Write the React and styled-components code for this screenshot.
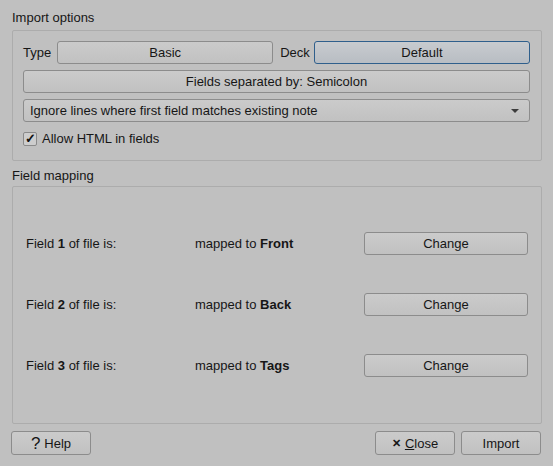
import React from "react";
import styled, { createGlobalStyle } from "styled-components";

const Global = createGlobalStyle`
  html, body { margin: 0; padding: 0; background: #c0c0c0; }
  body { font-family: "Liberation Sans", Arial, sans-serif; font-size: 13px; color: #161616; }
`;

const Window = styled.div`
  width: 553px;
  height: 466px;
  box-sizing: border-box;
  padding: 10px 12px 0 12px;
  display: flex;
  flex-direction: column;
  background: #c0c0c0;
`;

const SectionTitle = styled.div`
  height: 15px;
  line-height: 15px;
  margin-bottom: ${(p) => p.$mb || 5}px;
`;

const Group = styled.div`
  border: 1px solid #acacac;
  border-radius: 2px;
  box-sizing: border-box;
  width: 530px;
`;

const OptionsBody = styled(Group)`
  height: 131px;
  padding: 10px 11px 0 10px;
  display: flex;
  flex-direction: column;
  gap: 6px;
  margin-bottom: 7px;
`;

const Row = styled.div`
  display: flex;
  align-items: center;
`;

const Label = styled.span`
  margin: 0 ${(p) => p.$mr || 5}px 0 ${(p) => p.$ml || 0}px;
`;

const Button = styled.button`
  font-family: inherit;
  font-size: 13px;
  color: #161616;
  height: ${(p) => p.$h || 23}px;
  width: ${(p) => (p.$w ? p.$w + "px" : "auto")};
  flex: ${(p) => (p.$grow ? 1 : "none")};
  box-sizing: border-box;
  border: 1px solid ${(p) => (p.$focus ? "#2f5f8c" : "#8c8c8c")};
  border-radius: 3px;
  background: ${(p) =>
    p.$focus
      ? "linear-gradient(#c8cbcf, #b8bdc3)"
      : "linear-gradient(#cbcbcb, #c1c1c1)"};
  padding: 0;
  display: flex;
  align-items: center;
  justify-content: center;
  gap: 4px;
  cursor: default;
`;

const Combo = styled.div`
  height: 23px;
  box-sizing: border-box;
  border: 1px solid #8c8c8c;
  border-radius: 3px;
  background: linear-gradient(#cbcbcb, #c1c1c1);
  display: flex;
  align-items: center;
  padding: 0 10px 0 6px;
`;

const ComboText = styled.span`
  flex: 1;
`;

const Arrow = styled.span`
  width: 0;
  height: 0;
  border-left: 4px solid transparent;
  border-right: 4px solid transparent;
  border-top: 4px solid #3c3c3c;
`;

const CheckRow = styled.label`
  display: flex;
  align-items: center;
  gap: 5px;
  margin-top: 3px;
`;

const CheckBox = styled.span`
  width: 14px;
  height: 14px;
  box-sizing: border-box;
  border: 1px solid #8a8a8a;
  border-radius: 2px;
  background: #cdcdcd;
  display: flex;
  align-items: center;
  justify-content: center;
  font-size: 13px;
  font-weight: bold;
  line-height: 1;
  color: #111;
`;

const MappingBody = styled(Group)`
  height: 238px;
  padding: 45px 13px 0 13px;
  display: flex;
  flex-direction: column;
  gap: 38px;
`;

const MapRow = styled.div`
  display: grid;
  grid-template-columns: 169px 169px 164px;
  align-items: center;
  height: 23px;
`;

const Footer = styled.div`
  display: flex;
  align-items: center;
  margin-top: 7px;
  margin-left: -1px;
  gap: 6px;
`;

const Spacer = styled.div`
  flex: 1;
`;

const Q = styled.span`
  font-size: 17px;
  line-height: 1;
`;

const Underline = styled.span`
  text-decoration: underline;
`;

const X = styled.span`
  font-size: 11px;
  font-weight: bold;
`;

const rows = [
  ["1", "Front"],
  ["2", "Back"],
  ["3", "Tags"],
];

export default function App() {
  return (
    <>
      <Global />
      <Window>
        <SectionTitle $mb={5}>Import options</SectionTitle>
        <OptionsBody>
          <Row>
            <Label $mr={6}>Type</Label>
            <Button $w={216}>Basic</Button>
            <Label $ml={7} $mr={4}>Deck</Label>
            <Button $grow $focus>Default</Button>
          </Row>
          <Button>Fields separated by: Semicolon</Button>
          <Combo>
            <ComboText>Ignore lines where first field matches existing note</ComboText>
            <Arrow />
          </Combo>
          <CheckRow>
            <CheckBox>✓</CheckBox>
            Allow HTML in fields
          </CheckRow>
        </OptionsBody>
        <SectionTitle $mb={3}>Field mapping</SectionTitle>
        <MappingBody>
          {rows.map(([n, f]) => (
            <MapRow key={n}>
              <span>
                Field <b>{n}</b> of file is:
              </span>
              <span>
                mapped to <b>{f}</b>
              </span>
              <Button>Change</Button>
            </MapRow>
          ))}
        </MappingBody>
        <Footer>
          <Button $w={80} $h={24}>
            <Q>?</Q> Help
          </Button>
          <Spacer />
          <Button $w={80} $h={24}>
            <X>✕</X>
            <span>
              <Underline>C</Underline>lose
            </span>
          </Button>
          <Button $w={80} $h={24}>Import</Button>
        </Footer>
      </Window>
    </>
  );
}
